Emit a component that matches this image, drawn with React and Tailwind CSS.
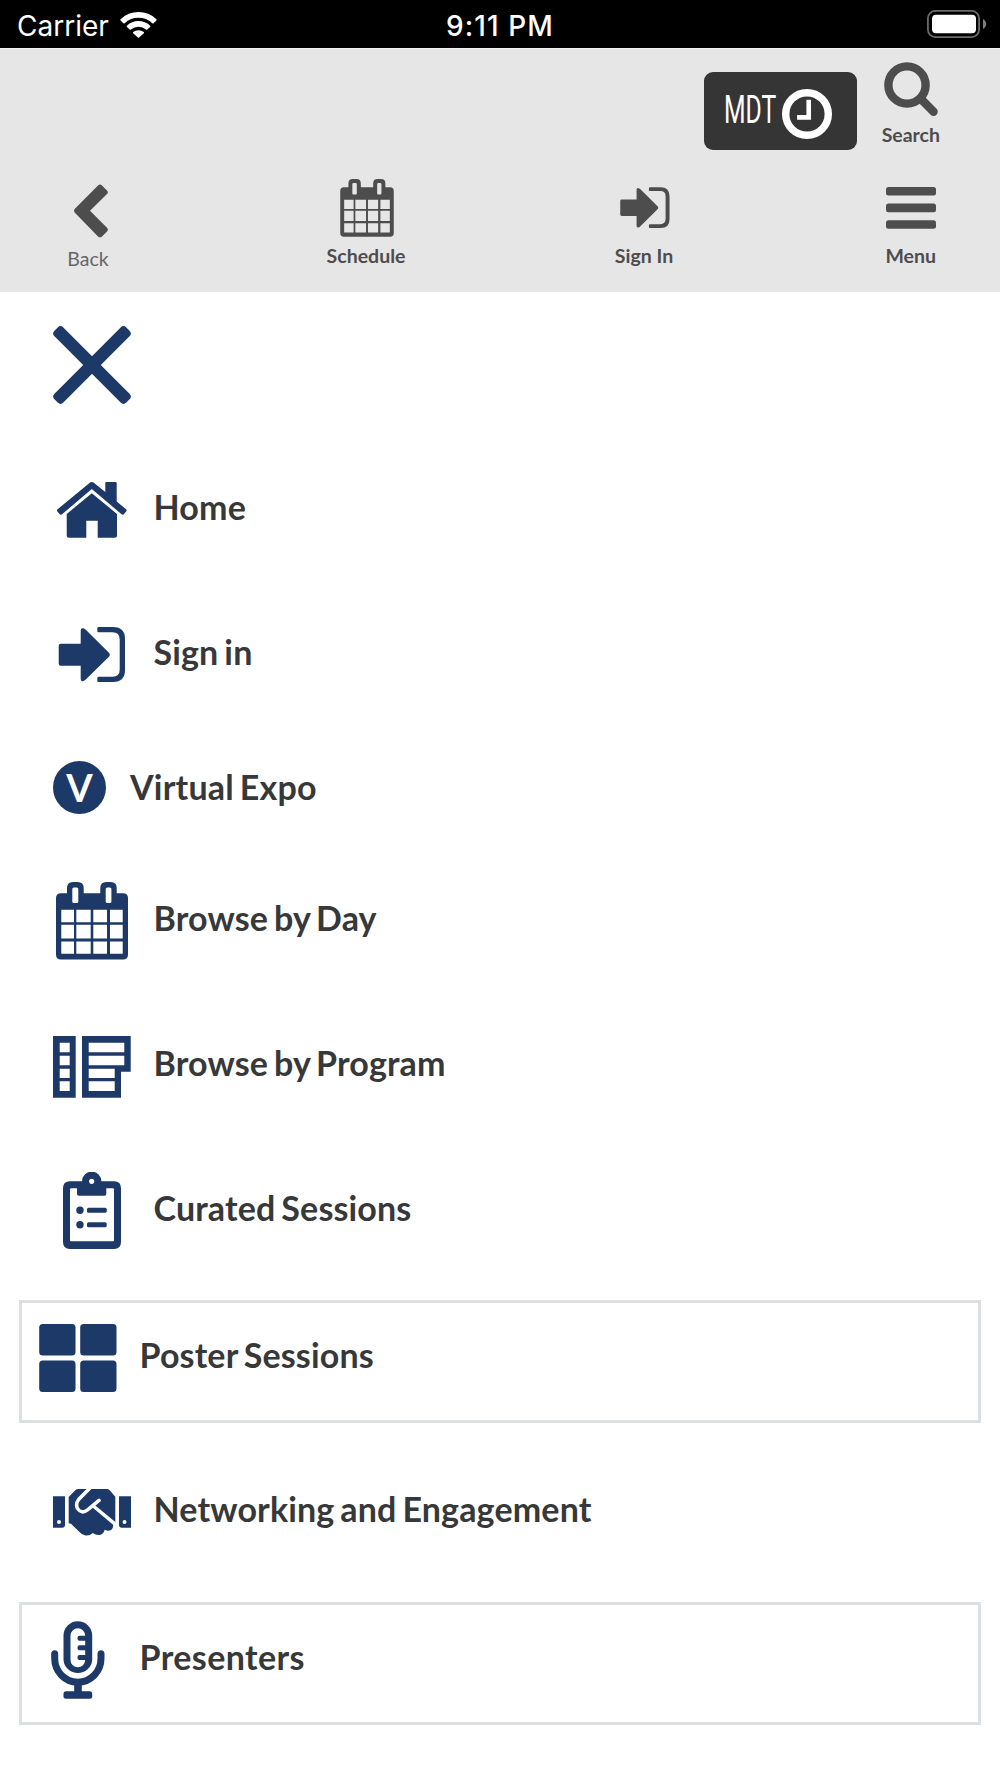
import React from 'react';

const Icon = ({ children, className = 'w-[78px] h-[78px] shrink-0' }) => (
  <svg viewBox="0 0 78 78" fill="currentColor" className={className}>
    {children}
  </svg>
);

const CloseIcon = () => (
  <Icon>
    <rect x="-11.8" y="32.75" width="101.6" height="12.5" rx="4" transform="rotate(45 39 39)" />
    <rect x="-11.8" y="32.75" width="101.6" height="12.5" rx="4" transform="rotate(-45 39 39)" />
  </Icon>
);

const HomeIcon = () => (
  <Icon>
    <path d="M36.2 12.2Q38.8 9.9 41.4 12.2L52.3 21V12Q52.3 11 53.3 11H62.7Q63.7 11 63.7 12V30.5L73 38.2Q74.2 39.3 73.2 40.5L70.8 43.2Q69.8 44.3 68.6 43.3L38.8 18L9 43.3Q7.8 44.3 6.8 43.2L4.4 40.5Q3.4 39.3 4.6 38.2Z" />
    <path d="M38.8 22.2L64 43V64.2Q64 66.7 61.5 66.7H44.7V49.7H33.3V66.7H16.2Q13.7 66.7 13.7 64.2V43Z" />
  </Icon>
);

const SignInIcon = ({ className }) => (
  <Icon className={className}>
    <path d="M5.7 29.7Q5.7 27.7 7.7 27.7H27.7V14.5Q27.7 11.5 30.5 12.3L32.5 13.6L56.2 37Q57.6 38.7 56.2 40.4L32.5 63.8L30.5 65.1Q27.7 65.9 27.7 62.9V49.7H7.7Q5.7 49.7 5.7 47.7Z" />
    <path d="M45.6 11H60Q72 11 72 23V54Q72 66 60 66H45.6Q44.3 66 44.3 64.7V62Q44.3 60.7 45.6 60.7H59.5Q66.7 60.7 66.7 53.5V23.5Q66.7 16.3 59.5 16.3H45.6Q44.3 16.3 44.3 15V12.3Q44.3 11 45.6 11Z" />
  </Icon>
);

const CalendarIcon = ({ className }) => (
  <Icon className={className}>
    <path
      fillRule="evenodd"
      d="M8 11.2H14V6Q14 0 20 0H24.7Q30.7 0 30.7 6V11.2H47.3V6Q47.3 0 53.3 0H57.7Q63.7 0 63.7 6V11.2H70Q75 11.2 75 16.2V72.5Q75 77.5 70 77.5H8Q3 77.5 3 72.5V16.2Q3 11.2 8 11.2Z
        M20.8 5.5Q19.3 5.5 19.3 7V19.5Q19.3 21 20.8 21H23.8Q25.3 21 25.3 19.5V7Q25.3 5.5 23.8 5.5Z
        M54.2 5.5Q52.7 5.5 52.7 7V19.5Q52.7 21 54.2 21H56.9Q58.4 21 58.4 19.5V7Q58.4 5.5 56.9 5.5Z
        M8.3 27.8H21V40.2H8.3Z M23.3 27.8H37.7V40.2H23.3Z M40.3 27.8H54V40.2H40.3Z M57 27.8H69.7V40.2H57Z
        M8.3 42.8H21V56.5H8.3Z M23.3 42.8H37.7V56.5H23.3Z M40.3 42.8H54V56.5H40.3Z M57 42.8H69.7V56.5H57Z
        M8.3 59.5H21V71.8H8.3Z M23.3 59.5H37.7V71.8H23.3Z M40.3 59.5H54V71.8H40.3Z M57 59.5H69.7V71.8H57Z"
    />
  </Icon>
);

const ProgramIcon = () => (
  <Icon>
    <path
      fillRule="evenodd"
      d="M0 9H22.7V70.7H0Z
        M6.7 15.7H16.7V25.3H6.7Z M6.7 28.7H16.7V38.3H6.7Z M6.7 41.7H16.7V51H6.7Z M6.7 54.3H16.7V64H6.7Z
        M29 9H77.7V44.7H68V70.7H29Z
        M35.7 15.7H71.3V25.3H35.7Z M35.7 28.7H71.3V38.3H35.7Z M35.7 41.7H61.7V51H35.7Z M35.7 54.3H61.7V64H35.7Z"
    />
  </Icon>
);

const ClipboardIcon = () => (
  <Icon>
    <path
      fillRule="evenodd"
      d="M17 9.3H29A9.7 9.7 0 0 1 48.4 9.3H61Q68 9.3 68 16.3V70Q68 77 61 77H17Q10 77 10 70V16.3Q10 9.3 17 9.3Z
        M18 16.3Q17 16.3 17 17.3V68.3Q17 69.3 18 69.3H60Q61 69.3 61 68.3V17.3Q61 16.3 60 16.3H53.3V21.7Q53.3 23.7 51.3 23.7H26Q24 23.7 24 21.7V16.3Z
        M38.7 6.7A2.6 2.6 0 1 0 38.7 11.9A2.6 2.6 0 1 0 38.7 6.7Z"
    />
    <circle cx="27" cy="38.3" r="3.7" />
    <circle cx="27" cy="52.7" r="3.7" />
    <rect x="34" y="35.8" width="19.7" height="5" rx="1.5" />
    <rect x="34" y="50.2" width="19.7" height="5" rx="1.5" />
  </Icon>
);

const PosterIcon = () => (
  <Icon>
    <rect x="0.2" y="5" width="36.3" height="31.5" rx="3.5" />
    <rect x="41.2" y="5" width="36.3" height="31.5" rx="3.5" />
    <rect x="0.2" y="41.4" width="36.3" height="31.5" rx="3.5" />
    <rect x="41.2" y="41.4" width="36.3" height="31.5" rx="3.5" />
  </Icon>
);

const HandshakeIcon = () => (
  <Icon>
    <g transform="translate(0 -1)">
      <path
        fillRule="evenodd"
        d="M0 24.3H12V52.7Q12 55.7 9 55.7H0Z M6 48A2 2 0 1 0 6 52A2 2 0 1 0 6 48Z
          M66 24.3H78V55.7H69Q66 55.7 66 52.7Z M71.5 48A2 2 0 1 0 71.5 52A2 2 0 1 0 71.5 48Z"
      />
      <path d="M15.7 25L23 17.6Q24 17 25.2 17H54Q55.3 17 56.2 17.8L62.3 24.7V51.3L60 50.5Q61 55.5 58.2 58Q55.4 59.6 51.8 57.8Q50.3 62.3 47 63Q43 63.6 39.8 61Q36 64.3 31.8 63.3Q28.5 62.2 26.5 60L18 51.8L15.7 51.3Z" />
      <path
        d="M37 16L25.6 27.5Q22.3 32 24.4 36.4Q28.5 42.6 34.6 37.8L46 28.4M39.7 33.5L62.4 52.3"
        fill="none"
        stroke="#fff"
        strokeWidth="3.5"
        strokeLinecap="round"
      />
    </g>
  </Icon>
);

const MicIcon = () => (
  <Icon>
    <path
      fillRule="evenodd"
      d="M38.8 0.3A14.4 14.4 0 0 1 53.2 14.7V38.9A14.4 14.4 0 0 1 24.5 38.9V14.7A14.4 14.4 0 0 1 38.8 0.3Z
        M38.8 7.3A7.3 7.3 0 0 0 31.5 14.6V38.7A7.3 7.3 0 0 0 46.2 39H40.5Q38.5 39 38.5 37V36Q38.5 34 40.5 34H46.2V29.3H40.5Q38.5 29.3 38.5 27.3V26.3Q38.5 24.3 40.5 24.3H46.2V19.7H40.5Q38.5 19.7 38.5 17.7V16.7Q38.5 14.7 40.5 14.7H46.2A7.3 7.3 0 0 0 38.8 7.3Z"
    />
    <path
      d="M15.7 32.8V37.5C15.7 50.5 26 61.2 38.8 61.2S62 50.5 62 37.5V32.8"
      fill="none"
      stroke="currentColor"
      strokeWidth="7"
      strokeLinecap="round"
    />
    <rect x="35.2" y="62" width="7.6" height="10" />
    <rect x="24.5" y="70.3" width="28.7" height="7.4" rx="2.5" />
  </Icon>
);

const ExpoIcon = () => (
  <span className="flex h-[53px] w-[53px] shrink-0 items-center justify-center rounded-full bg-[#1c3967] pb-[2px] text-[38px] leading-none font-bold text-white">
    V
  </span>
);

const menuItems = [
  { label: 'Home', icon: HomeIcon },
  { label: 'Sign in', icon: SignInIcon },
  {
    label: 'Virtual Expo',
    icon: ExpoIcon,
    rowClass: 'h-[121px] mx-[53px] gap-[24px]',
    labelClass: 'pb-[2px] tracking-[0.2px]',
  },
  { label: 'Browse by Day', icon: CalendarIcon },
  { label: 'Browse by Program', icon: ProgramIcon },
  { label: 'Curated Sessions', icon: ClipboardIcon },
  {
    label: 'Poster Sessions',
    icon: PosterIcon,
    rowClass: 'h-[123px] mt-[17px] mb-4 mx-[19px] pl-[16.5px] pb-2 gap-[23px] border-[3px] border-[#dde0e2]',
  },
  { label: 'Networking and Engagement', icon: HandshakeIcon },
  {
    label: 'Presenters',
    icon: MicIcon,
    rowClass: 'h-[123px] mt-[18px] mx-[19px] pl-[16.5px] pb-2 gap-[23px] border-[3px] border-[#dde0e2]',
    labelClass: 'pb-1.5 tracking-[0.4px]',
  },
];

const defaultRow = 'h-[145px] mx-[53px] gap-[22.5px]';
const defaultLabel = 'pb-1.5 tracking-[0.15px]';

const StatusBar = () => (
  <div className="grid h-12 grid-cols-3 items-center bg-black px-[17px] font-['Inter',sans-serif] text-[28px] leading-none text-white">
    <div className="flex items-center gap-[11px]">
      <span className="pt-[3px] font-normal">Carrier</span>
      <svg width="37" height="28" viewBox="0 0 37 28" fill="currentColor">
        <path d="M0.6 9.2A25.6 25.6 0 0 1 36.4 9.2Q37 9.8 36.4 10.4L33.6 13.2Q33 13.7 32.3 13.2A20.3 20.3 0 0 0 4.7 13.2Q4 13.7 3.4 13.2L0.6 10.4Q0 9.8 0.6 9.2Z" />
        <path d="M6.9 15.7A16.8 16.8 0 0 1 30.1 15.7Q30.7 16.3 30.1 16.9L27.2 19.6Q26.6 20.1 26 19.6A11.2 11.2 0 0 0 11 19.6Q10.4 20.1 9.8 19.6L6.9 16.9Q6.3 16.3 6.9 15.7Z" />
        <path d="M13.2 22.1A8.2 8.2 0 0 1 23.8 22.1Q24.4 22.7 23.8 23.3L19.1 27.6Q18.5 28.1 17.9 27.6L13.2 23.3Q12.6 22.7 13.2 22.1Z" />
      </svg>
    </div>
    <span className="pt-[3px] text-center font-medium tracking-[1.1px]">9:11 PM</span>
    <svg width="60" height="28" viewBox="0 0 60 28" className="-mr-[4px] justify-self-end">
      <rect x="0.9" y="0.9" width="51.2" height="26.2" rx="7.5" fill="none" stroke="#6b6b6b" strokeWidth="1.8" />
      <rect x="5" y="4.8" width="44" height="18.4" rx="4" fill="#fff" />
      <path d="M56 9Q59.2 10.8 59.2 14T56 19Z" fill="#7d7d7d" />
    </svg>
  </div>
);

const NavButton = ({ label, children, className = '' }) => (
  <button className={`flex flex-col items-center text-[19.5px] leading-6 font-bold ${className}`}>
    {children}
    <span>{label}</span>
  </button>
);

const Header = () => (
  <header className="h-[244px] border-t border-[#f4f4f4] bg-[#e6e6e6] text-[#4d4d4d]">
    <div className="flex h-[129px] items-start justify-end gap-[25px] pt-[13px] pr-[60px]">
      <div className="mt-[10px] flex h-[78px] w-[153px] items-center rounded-[9px] bg-[#353535] pl-[20px] text-white">
        <span className="w-[58px] shrink-0 origin-left scale-x-[0.65] pb-[3px] font-['Roboto',sans-serif] text-[38px] leading-none font-normal">
          MDT
        </span>
        <svg width="50" height="50" viewBox="0 0 50 50" className="mt-[5px] shrink-0">
          <circle cx="25" cy="25" r="21.3" fill="none" stroke="#fff" strokeWidth="7.4" />
          <path d="M17.3 29.2H27V13.3" fill="none" stroke="#fff" strokeWidth="4.8" strokeLinecap="square" transform="translate(.8 .3) scale(.96)" />
        </svg>
      </div>
      <NavButton label="Search">
        <svg width="54" height="54" viewBox="0 0 54 54" className="mb-[7px]">
          <circle cx="23" cy="23" r="18.6" fill="none" stroke="currentColor" strokeWidth="8.4" />
          <path d="M37 37L49.6 49.8" stroke="currentColor" strokeWidth="8.4" strokeLinecap="round" />
        </svg>
      </NavButton>
    </div>
    <nav className="grid grid-cols-[176px_380px_176px_204px] items-start">
      <button className="flex flex-col items-center pt-[6px] text-[19.5px] leading-6 text-[#666]">
        <svg width="34" height="54" viewBox="0 0 34 54" className="mb-[9px] ml-[5px] text-[#4d4d4d]">
          <path
            d="M24 1.4Q26 -0.6 28 1.4L33 6.4Q34.8 8.2 33 10L16 26.8L33 43.8Q34.8 45.6 33 47.4L28 52.4Q26 54.2 24 52.4L0.9 28.8Q-0.9 26.8 0.9 24.8Z"
            fill="currentColor"
          />
        </svg>
        <span>Back</span>
      </button>
      <NavButton label="Schedule">
        <CalendarIcon className="mt-[1px] mb-[7px] ml-[2px] h-[58px] w-[58px]" />
      </NavButton>
      <NavButton label="Sign In">
        <SignInIcon className="mt-[1px] mb-[7px] ml-[2px] h-[58px] w-[58px]" />
      </NavButton>
      <NavButton label="Menu" className="justify-self-end">
        <svg width="50" height="42" viewBox="0 0 50 42" fill="currentColor" className="mt-[9px] mb-[15px]">
          <rect width="50" height="8.6" rx="2.5" />
          <rect y="16.6" width="50" height="8.6" rx="2.5" />
          <rect y="33.2" width="50" height="8.6" rx="2.5" />
        </svg>
      </NavButton>
    </nav>
  </header>
);

const App = () => {
  return (
    <div className="h-[1778px] w-[1000px] overflow-hidden bg-white font-['Lato',sans-serif]">
      <StatusBar />
      <Header />
      <div className="flex flex-col text-[#1c3967]">
        <button className="mx-[53px] flex h-[145px] items-center" aria-label="Close">
          <CloseIcon />
        </button>
        {menuItems.map(({ label, icon: ItemIcon, rowClass, labelClass }) => (
          <a key={label} href="#" className={`flex items-center ${rowClass || defaultRow}`}>
            <ItemIcon />
            <span
              className={`text-[34px] leading-10 font-bold whitespace-nowrap text-[#373839] [word-spacing:-2.5px] ${labelClass || defaultLabel}`}
            >
              {label}
            </span>
          </a>
        ))}
      </div>
    </div>
  );
};

export default App;
